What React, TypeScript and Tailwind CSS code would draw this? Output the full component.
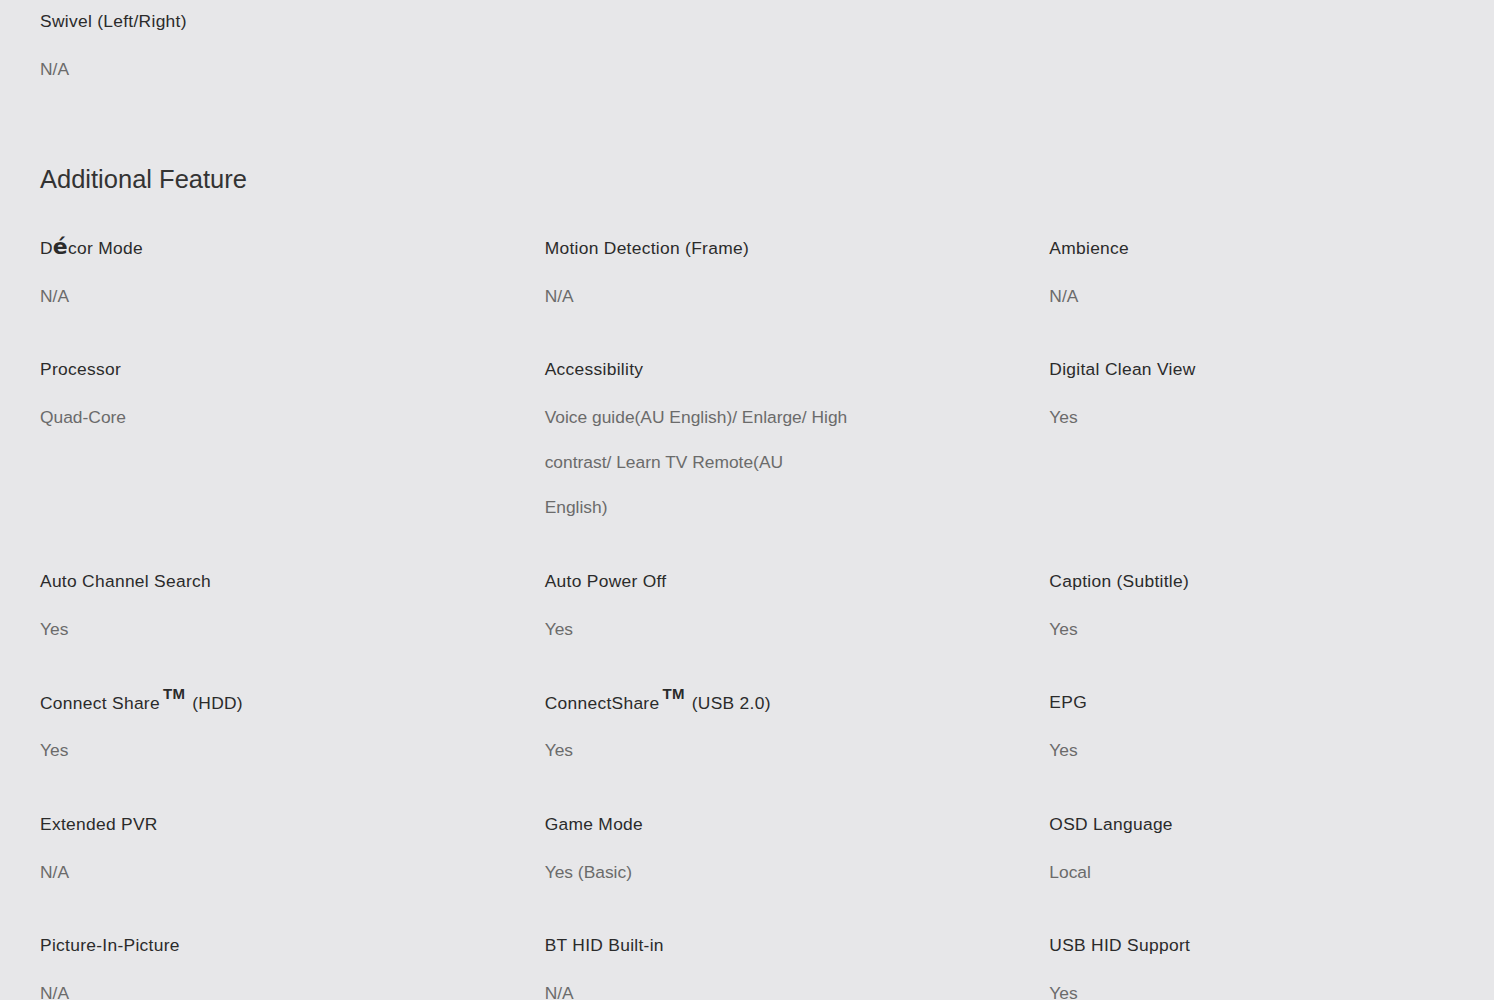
import React from "react";

type Item = { label: React.ReactNode; value: string };

const TM = () => (
  <sup className="relative top-[-3px] ml-[3px] mr-[7px] text-[15px] font-semibold align-super leading-none">TM</sup>
);

const items: Item[] = [
  {
    label: (
      <>
        D<span className="text-[22px] font-semibold leading-none" style={{ fontFamily: '"DejaVu Sans", sans-serif' }}>é</span>cor Mode
      </>
    ),
    value: "N/A",
  },
  { label: "Motion Detection (Frame)", value: "N/A" },
  { label: "Ambience", value: "N/A" },
  { label: "Processor", value: "Quad-Core" },
  { label: "Accessibility", value: "Voice guide(AU English)/ Enlarge/ High contrast/ Learn TV Remote(AU English)" },
  { label: "Digital Clean View", value: "Yes" },
  { label: "Auto Channel Search", value: "Yes" },
  { label: "Auto Power Off", value: "Yes" },
  { label: "Caption (Subtitle)", value: "Yes" },
  {
    label: (
      <>
        Connect Share<TM />(HDD)
      </>
    ),
    value: "Yes",
  },
  {
    label: (
      <>
        ConnectShare<TM />(USB 2.0)
      </>
    ),
    value: "Yes",
  },
  { label: "EPG", value: "Yes" },
  { label: "Extended PVR", value: "N/A" },
  { label: "Game Mode", value: "Yes (Basic)" },
  { label: "OSD Language", value: "Local" },
  { label: "Picture-In-Picture", value: "N/A" },
  { label: "BT HID Built-in", value: "N/A" },
  { label: "USB HID Support", value: "Yes" },
];

function Spec({ label, value }: Item) {
  return (
    <div>
      <div className="h-[27px] whitespace-nowrap text-[17.4px] leading-[27px] tracking-[0.3px] text-[#2b2b2b]">{label}</div>
      <div className="mt-[12px] max-w-[305px] text-[17.4px] leading-[45px] text-[#6b6b6b]">{value}</div>
    </div>
  );
}

export default function App() {
  return (
    <div
      className="h-screen w-full overflow-hidden bg-[#e7e7e9] px-10 pt-[7.5px]"
      style={{ fontFamily: '"Liberation Sans", Arial, sans-serif' }}
    >
      <Spec label="Swivel (Left/Right)" value="N/A" />
      <h2 className="mt-[69.5px] mb-[37.5px] text-[25.5px] leading-[36px] font-normal text-[#333333]">
        Additional Feature
      </h2>
      <div className="grid grid-cols-3 gap-x-[100px] gap-y-[37.5px]">
        {items.map((it, i) => (
          <Spec key={i} label={it.label} value={it.value} />
        ))}
      </div>
    </div>
  );
}
